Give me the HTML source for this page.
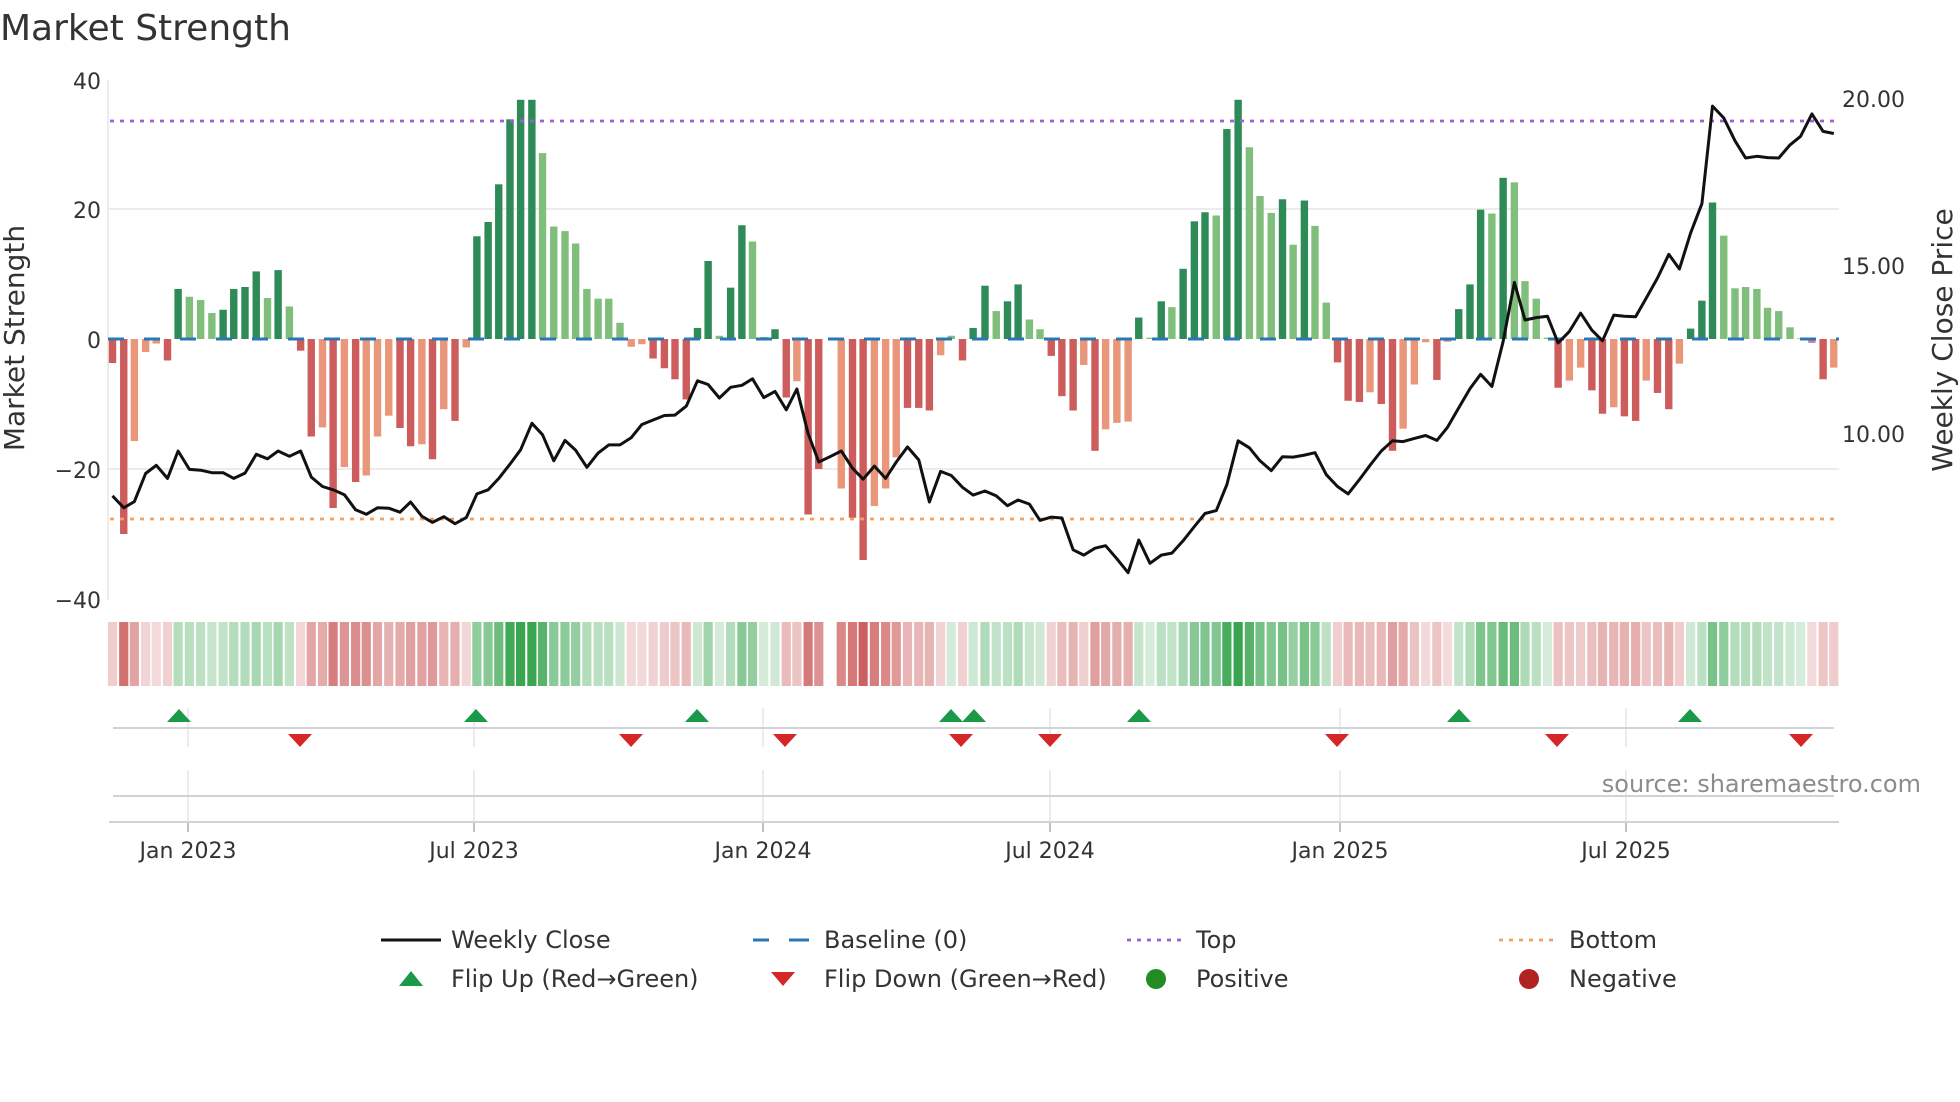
<!DOCTYPE html>
<html><head><meta charset="utf-8">
<style>
html,body{margin:0;padding:0;background:#fff;width:1960px;height:1102px;overflow:hidden}
svg{display:block;font-family:"DejaVu Sans","Liberation Sans",sans-serif}
</style></head>
<body>
<svg id="s" width="1960" height="1102" viewBox="0 0 1960 1102" xmlns="http://www.w3.org/2000/svg">
<text x="0" y="40" font-size="36" fill="#333">Market Strength</text>
<line x1="108" y1="209" x2="1839" y2="209" stroke="#ececec" stroke-width="2"/>
<line x1="108" y1="469" x2="1839" y2="469" stroke="#ececec" stroke-width="2"/>
<line x1="108" y1="80" x2="108" y2="600" stroke="#e6e6e6" stroke-width="1.5"/>
<g font-size="22" fill="#333" text-anchor="end">
<text x="101" y="89">40</text>
<text x="101" y="218">20</text>
<text x="101" y="348">0</text>
<text x="101" y="478">−20</text>
<text x="101" y="608">−40</text>
</g>
<g font-size="22" fill="#333">
<text x="1842" y="107">20.00</text>
<text x="1842" y="274">15.00</text>
<text x="1842" y="442">10.00</text>
</g>
<text transform="translate(24,338) rotate(-90)" font-size="28" fill="#333" text-anchor="middle">Market Strength</text>
<text transform="translate(1952,340) rotate(-90)" font-size="28" fill="#333" text-anchor="middle">Weekly Close Price</text>
<g id="bars"></g>
<g id="heat"></g>
<line x1="108" y1="339" x2="1839" y2="339" stroke="#2a77b4" stroke-width="3" stroke-dasharray="16,20"/>
<line x1="110" y1="121" x2="1839" y2="121" stroke="#9c5fd6" stroke-width="2.8" stroke-dasharray="4,6"/>
<line x1="110" y1="519" x2="1839" y2="519" stroke="#f4a05c" stroke-width="2.8" stroke-dasharray="4,6"/>
<polyline id="price" fill="none" stroke="#111" stroke-width="3" stroke-linejoin="round"/>
<g stroke="#e6e6ea" stroke-width="1.5" id="vg"></g>
<line x1="113" y1="728" x2="1834" y2="728" stroke="#d2d2d6" stroke-width="2"/>
<line x1="113" y1="796" x2="1834" y2="796" stroke="#d2d2d6" stroke-width="2"/>
<line x1="109" y1="822" x2="1839" y2="822" stroke="#d2d2d6" stroke-width="2"/>
<g id="mk"></g>
<text x="1921" y="792" font-size="24" fill="#8c8c8c" text-anchor="end">source: sharemaestro.com</text>
<g font-size="22" fill="#333" text-anchor="middle" id="tl"></g>
<g font-size="24" fill="#333">
<line x1="381" y1="940" x2="441" y2="940" stroke="#111" stroke-width="3"/>
<text x="451" y="948">Weekly Close</text>
<line x1="753" y1="940" x2="809" y2="940" stroke="#2a77b4" stroke-width="3" stroke-dasharray="16,20"/>
<line x1="789" y1="940" x2="809" y2="940" stroke="#2a77b4" stroke-width="3"/>
<text x="824" y="948">Baseline (0)</text>
<line x1="1127" y1="940" x2="1181" y2="940" stroke="#9c5fd6" stroke-width="2.8" stroke-dasharray="4,6"/>
<text x="1196" y="948">Top</text>
<line x1="1499" y1="940" x2="1554" y2="940" stroke="#f4a05c" stroke-width="2.8" stroke-dasharray="4,6"/>
<text x="1569" y="948">Bottom</text>
<polygon points="399,986 423,986 411,971" fill="#1a9a49"/>
<text x="451" y="987">Flip Up (Red→Green)</text>
<polygon points="771,972 795,972 783,986" fill="#d62728"/>
<text x="824" y="987">Flip Down (Green→Red)</text>
<circle cx="1156" cy="979" r="10" fill="#228b22"/>
<text x="1196" y="987">Positive</text>
<circle cx="1529" cy="979" r="10" fill="#b22222"/>
<text x="1569" y="987">Negative</text>
</g>
</svg>
<script>
var NS="http://www.w3.org/2000/svg";
function el(t,a,p){var e=document.createElementNS(NS,t);for(var k in a)e.setAttribute(k,a[k]);p.appendChild(e);return e;}
var B1=[[180,-3.7,'r'],[198,-30,'r'],[215,-15.7,'o'],[233,-2,'o'],[250,-0.7,'o'],[268,-3.3,'r'],[285,7.7,'d'],[303,6.5,'l'],[321,6,'l'],[339,4,'l'],[357,4.5,'d'],[374,7.7,'d'],[392,8,'d'],[410,10.4,'d'],[428,6.3,'l'],[445,10.6,'d'],[463,5,'l'],[481,-1.8,'r'],[498,-15,'r'],[516,-13.6,'o'],[533,-26,'r'],[551,-19.7,'o'],[569,-22,'r'],[586,-21,'o'],[604,-15,'o'],[622,-11.8,'o'],[640,-13.7,'r'],[657,-16.5,'r'],[675,-16.2,'o'],[692,-18.5,'r'],[710,-10.8,'o'],[728,-12.6,'r'],[746,-1.3,'o'],[763,15.8,'d'],[781,18,'d'],[798,23.8,'d'],[816,33.8,'d'],[833,36.8,'d'],[851,36.8,'d'],[868,28.6,'l'],[886,17.3,'l'],[904,16.6,'l'],[921,14.7,'l'],[939,7.7,'l'],[957,6.2,'l'],[974,6.2,'l'],[992,2.5,'l'],[1010,-1.2,'o'],[1027,-0.8,'o'],[1045,-3,'r'],[1063,-4.5,'r'],[1080,-6.2,'r'],[1098,-9.3,'r'],[1116,1.7,'d'],[1133,12,'d'],[1151,0.5,'l'],[1169,7.9,'d'],[1187,17.5,'d'],[1204,15,'l'],[1222,0.3,'l'],[1240,1.5,'d'],[1258,-9,'r'],[1275,-6.5,'o'],[1293,-27,'r'],[1310,-20,'r'],[1346,-23,'o'],[1364,-27.5,'r'],[1381,-34,'r'],[1399,-25.7,'o'],[1417,-23,'o'],[1434,-18.2,'o'],[1452,-10.6,'r'],[1470,-10.6,'r'],[1487,-11,'r'],[1505,-2.5,'o'],[1522,0.5,'l'],[1540,-3.3,'r'],[1557,1.7,'d']];
var B2=[[8,8.2,'d'],[26,4.3,'l'],[44,5.8,'d'],[61,8.4,'d'],[79,3,'l'],[96,1.5,'l'],[114,-2.6,'r'],[131,-8.8,'r'],[149,-11,'r'],[166,-4,'o'],[184,-17.2,'r'],[201,-13.9,'o'],[219,-12.9,'o'],[237,-12.7,'o'],[254,3.3,'d'],[272,0.2,'l'],[290,5.8,'d'],[307,4.9,'l'],[325,10.8,'d'],[343,18.1,'d'],[360,19.5,'d'],[378,19,'l'],[395,32.3,'d'],[413,36.8,'d'],[431,29.5,'l'],[448,22,'l'],[466,19.4,'l'],[484,21.5,'d'],[501,14.5,'l'],[519,21.3,'d'],[536,17.4,'l'],[554,5.6,'l'],[572,-3.6,'r'],[589,-9.5,'r'],[607,-9.7,'r'],[624,-8.2,'o'],[642,-10,'r'],[660,-17.2,'r'],[677,-13.8,'o'],[695,-7,'o'],[713,-0.5,'o'],[731,-6.3,'r'],[748,-0.4,'m'],[766,4.6,'d'],[784,8.4,'d'],[801,19.9,'d'],[819,19.3,'l'],[837,24.8,'d'],[855,24.1,'l'],[872,8.9,'l'],[890,6.2,'l'],[908,0.2,'l'],[925,-7.5,'r'],[943,-6.4,'o'],[961,-4.4,'o'],[979,-7.9,'r'],[996,-11.5,'r'],[1014,-10.5,'o'],[1031,-11.9,'r'],[1049,-12.6,'r'],[1066,-6.4,'o'],[1084,-8.3,'r'],[1102,-10.8,'r'],[1119,-3.8,'o'],[1137,1.6,'d'],[1155,5.9,'d'],[1172,21,'d'],[1190,15.9,'l'],[1208,7.8,'l'],[1225,8,'l'],[1243,7.7,'l'],[1260,4.8,'l'],[1278,4.3,'l'],[1296,1.8,'l'],[1313,0.1,'l'],[1331,-0.6,'m'],[1349,-6.2,'r'],[1366,-4.4,'o']];
var col={d:'#2e8a57',l:'#7fbf7b',r:'#cd5c5c',o:'#e9967a',m:'#c77fa0'};
var bars=[];
B1.forEach(function(b){bars.push([b[0]/1.6,b[1],b[2]]);});
B2.forEach(function(b){bars.push([980+b[0]/1.6,b[1],b[2]]);});
var gb=document.getElementById('bars'),gh=document.getElementById('heat');
bars.forEach(function(b){
  var x=b[0],v=b[1],h=Math.abs(v)*6.5,y=v>0?339-h:339;
  el('rect',{x:x-3.7,y:y,width:7.4,height:Math.max(h,0.8),fill:col[b[2]]},gb);
  var a=0.2+0.75*Math.min(1,Math.abs(v)/36);
  var c=v>=0?'rgba(46,160,70,'+a+')':'rgba(200,80,80,'+a+')';
  el('rect',{x:x-4.6,y:622,width:9.2,height:64,fill:c},gh);
});
var P1=[[180,1068],[198,1097],[215,1082],[233,1013],[250,993],[268,1025],[285,958],[303,1003],[321,1005],[339,1011],[357,1011],[374,1025],[392,1012],[410,966],[428,977],[445,958],[463,971],[481,958],[498,1022],[516,1045],[533,1053],[551,1065],[569,1102],[586,1113],[604,1097],[622,1098],[640,1108],[657,1083],[675,1118],[692,1133],[710,1119],[728,1136],[746,1121],[763,1063],[781,1053],[798,1025],[816,990],[833,955],[851,890],[868,918],[886,982],[904,932],[921,956],[939,998],[957,963],[974,943],[992,943],[1010,925],[1027,893],[1045,882],[1063,871],[1080,870],[1098,848],[1116,786],[1133,795],[1151,828],[1169,802],[1187,797],[1204,781],[1222,827],[1240,812],[1258,857],[1275,806],[1293,915],[1310,985],[1328,972],[1346,958],[1364,1000],[1381,1027],[1399,995],[1417,1025],[1434,985],[1452,948],[1470,980],[1487,1083],[1505,1008],[1522,1018],[1540,1047],[1557,1066]];
var P2=[[8,1056],[26,1068],[44,1092],[61,1078],[79,1088],[96,1128],[114,1120],[131,1122],[149,1200],[166,1213],[184,1196],[201,1190],[219,1222],[237,1256],[254,1176],[272,1233],[290,1213],[307,1208],[325,1178],[343,1143],[360,1111],[378,1104],[395,1040],[413,933],[431,950],[448,982],[466,1006],[484,972],[501,973],[519,968],[536,962],[554,1016],[572,1045],[589,1063],[607,1028],[624,993],[642,958],[660,933],[677,935],[695,927],[713,920],[731,932],[748,900],[766,852],[784,805],[801,770],[819,800],[837,690],[855,545],[872,637],[890,631],[908,628],[925,693],[943,665],[961,620],[979,662],[996,688],[1014,625],[1031,628],[1049,629],[1066,583],[1084,534],[1102,476],[1119,512],[1137,424],[1155,352],[1172,113],[1190,142],[1208,198],[1225,240],[1243,236],[1260,239],[1278,240],[1296,208],[1313,187],[1331,132],[1349,175],[1366,180]];
var pts=[];
P1.forEach(function(p){pts.push((p[0]/1.6).toFixed(1)+','+(60+p[1]/2.45).toFixed(1));});
P2.forEach(function(p){pts.push((980+p[0]/1.6).toFixed(1)+','+(60+p[1]/2.45).toFixed(1));});
document.getElementById('price').setAttribute('points',pts.join(' '));
var ticks=[[188,'Jan 2023'],[474,'Jul 2023'],[763,'Jan 2024'],[1050,'Jul 2024'],[1340,'Jan 2025'],[1626,'Jul 2025']];
var vg=document.getElementById('vg'),tl=document.getElementById('tl');
ticks.forEach(function(t){
  el('line',{x1:t[0],y1:708,x2:t[0],y2:747},vg);
  el('line',{x1:t[0],y1:770,x2:t[0],y2:822},vg);
  el('line',{x1:t[0],y1:822,x2:t[0],y2:832,stroke:'#aaa','stroke-width':1.5},vg);
  var tx=el('text',{x:t[0],y:858},tl);tx.textContent=t[1];
});
var mk=document.getElementById('mk');
[179,476,697,951,974,1139,1459,1690].forEach(function(x){el('polygon',{points:(x-12)+',722 '+(x+12)+',722 '+x+',709',fill:'#1a9a49'},mk);});
[300,631,785,961,1050,1337,1557,1801].forEach(function(x){el('polygon',{points:(x-12)+',734 '+(x+12)+',734 '+x+',747',fill:'#d62728'},mk);});
</script>
</body></html>
